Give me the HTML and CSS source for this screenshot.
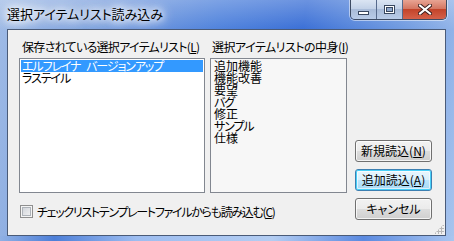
FILE: index.html
```html
<!DOCTYPE html>
<html lang="ja">
<head>
<meta charset="utf-8">
<link rel="stylesheet" href="styles.css">
</head>
<body>
<div class="window">
  <div class="titlebar">
    <span class="title">選択アイテムリスト読み込み</span>
    <div class="caption">
      <div class="cbtn min"><span class="g-min"></span></div>
      <div class="cbtn max"><span class="g-max"></span></div>
      <div class="cbtn close">
        <svg width="14" height="11" viewBox="0 0 14 11"><path d="M2 1.5 L12 9.5 M12 1.5 L2 9.5" stroke="#3b2020" stroke-width="4" stroke-linecap="square"/><path d="M2 1.5 L12 9.5 M12 1.5 L2 9.5" stroke="#fff" stroke-width="2" stroke-linecap="square"/></svg>
      </div>
    </div>
  </div>
  <div class="client">
    <div class="lbl lbl-left">保存されている選択アイテムリスト(<u>L</u>)</div>
    <div class="lbl lbl-right">選択アイテムリストの中身(<u>I</u>)</div>
    <div class="list list-left">
      <div class="item kana sel">エルフレイナ バージョンアップ</div>
      <div class="item kana">ラステイル</div>
    </div>
    <div class="list list-right">
      <div class="item">追加機能</div>
      <div class="item">機能改善</div>
      <div class="item">要望</div>
      <div class="item kana">バグ</div>
      <div class="item">修正</div>
      <div class="item kana">サンプル</div>
      <div class="item">仕様</div>
    </div>
    <div class="buttons">
      <div class="btn">新規読込(<u>N</u>)</div>
      <div class="btn def">追加読込(<u>A</u>)</div>
      <div class="btn kana">キャンセル</div>
    </div>
    <div class="check-row">
      <span class="checkbox"></span>
      <span class="check-text">チェックリストテンプレートファイルからも読み込む(<u>C</u>)</span>
    </div>
    <div class="grip"></div>
  </div>
</div>
</body>
</html>
```
FILE: styles.css
```css
* { box-sizing: border-box; }
html, body { margin: 0; padding: 0; }
body {
  width: 454px; height: 241px; overflow: hidden;
  font-family: "Noto Sans CJK JP", "Liberation Sans", sans-serif;
  font-size: 12px;
  font-feature-settings: "palt";
  color: #000;
}
.window {
  width: 454px; height: 241px;
  display: flex; flex-direction: column;
  padding: 0 8px 5px 7px;
  background:
    linear-gradient(180deg, rgba(255,255,255,0.25) 0, rgba(255,255,255,0) 30px),
    linear-gradient(100deg, #9fbbe6 0%, #7ea2de 20%, #4f82dc 45%, #3a6fd6 62%, #6f9ae0 82%, #a8c5ee 100%);
  position: relative;
}
.window::after {
  content: ""; position: absolute; left: 0; right: 0; bottom: 0; height: 5px;
  background: linear-gradient(90deg, #8fb0e4 0%, #4d7fd8 12%, #9dbdf0 30%, #b3cdf2 60%, #5b8ae0 80%, #a9c6f0 100%);
}
.titlebar {
  height: 29px; flex: none;
  display: flex; align-items: flex-start; justify-content: space-between;
  position: relative;
}
.title {
  margin-top: 5px;
  font-size: 13px; line-height: 17px;
  color: #000;
  text-shadow: 0 0 6px #fff, 0 0 10px #fff, 0 0 14px #fff, 0 0 14px #fff;
}
.caption {
  display: flex; height: 20px; margin-right: -1px;
  border: 1px solid #3d4b63; border-top: none;
  border-radius: 0 0 5px 5px; overflow: hidden;
  box-shadow: 0 0 0 1px rgba(255,255,255,0.5);
}
.cbtn { height: 19px; display: flex; align-items: center; justify-content: center; }
.min, .max {
  width: 26px;
  background: linear-gradient(180deg, #dbe5f3 0%, #c3d2e8 45%, #a9bcd9 50%, #b9cce8 100%);
  border-right: 1px solid #566a8c;
}
.close {
  width: 43px;
  background: linear-gradient(180deg, #e8a493 0%, #d47763 45%, #c3442a 50%, #d5614a 100%);
}
.g-min {
  width: 11px; height: 4px; margin-top: 7px;
  background: #fff; border: 1px solid #38475f;
}
.g-max {
  width: 11px; height: 9px;
  border: 1px solid #38475f;
  box-shadow: inset 0 0 0 1px #fff, inset 0 0 0 2px #38475f;
  background: #8ea7cc;
}
.client {
  flex: 1;
  background: #f0f0f0;
  border: 1px solid #4a5b78;
  display: grid;
  grid-template-columns: 186px 5px 137px 8px 77px;
  grid-template-rows: 20px 135px 27px;
  padding: 8px 13px 15px 11px;
  position: relative;
}
.lbl { line-height: 14px; white-space: nowrap; padding-top: 2px; }
.lbl-left { grid-column: 1; grid-row: 1; padding-left: 3px; letter-spacing: -0.7px; }
.lbl-right { grid-column: 3 / 6; grid-row: 1; padding-left: 2px; letter-spacing: -0.5px; }
u { text-decoration: underline; text-underline-offset: 1px; }
.list {
  grid-row: 2;
  border: 1px solid #828790;
  padding: 1px;
  overflow: hidden;
}
.list-left { grid-column: 1; background: #fff; }
.list-right { grid-column: 3; background: #f7f7f7; padding-left: 2px; }
.item { height: 12px; line-height: 12px; padding-left: 1px; white-space: pre; }
.kana { letter-spacing: -1.1px; word-spacing: 4px; }
.sel { background: #3399ff; color: #fff; }
.buttons {
  grid-column: 5; grid-row: 1 / 4;
  display: flex; flex-direction: column; justify-content: flex-end; gap: 7px;
}
.btn {
  height: 22px; width: 77px;
  border: 1px solid #707070; border-radius: 3px;
  background: linear-gradient(180deg, #f2f2f2 0%, #ebebeb 50%, #dddddd 50%, #cfcfcf 100%);
  box-shadow: inset 0 0 0 1px rgba(255,255,255,0.75);
  display: flex; align-items: center; justify-content: center;
  line-height: 14px;
}
.btn.kana { letter-spacing: 0; }
.btn.def {
  border-color: #3c7fb1;
  background: linear-gradient(180deg, #eaf6fd 0%, #d9f0fc 50%, #bee6fd 50%, #a7d9f5 100%);
  box-shadow: inset 0 0 0 1px #48d0f8, inset 0 0 0 2px rgba(255,255,255,0.6);
}
.check-row {
  grid-column: 1 / 4; grid-row: 3;
  display: flex; align-items: flex-start;
  padding-top: 12px; padding-left: 1px;
}
.checkbox {
  width: 13px; height: 13px; flex: none;
  border: 1px solid #8f8f8f;
  background: linear-gradient(135deg, #cbcfd5 0%, #f6f6f6 100%);
  box-shadow: inset 0 0 0 1px #f4f4f4, inset 0 0 0 2px #aeb3b9;
}
.check-text { margin-left: 4px; line-height: 13px; white-space: nowrap; letter-spacing: -1.3px; }
.grip {
  position: absolute; right: 1px; bottom: 1px; width: 10px; height: 10px;
  background-image: radial-gradient(circle, #b8b8b8 1px, transparent 1.2px);
  background-size: 3px 3px;
  clip-path: polygon(100% 0, 100% 100%, 0 100%);
}
```
